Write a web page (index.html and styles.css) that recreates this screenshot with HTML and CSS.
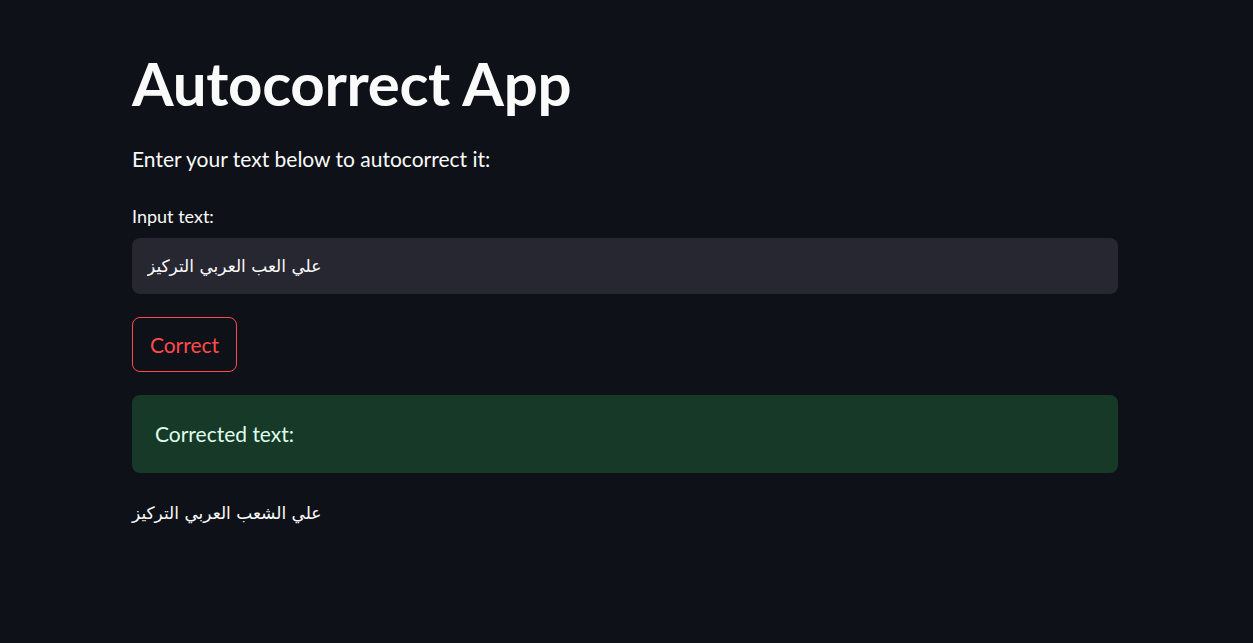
FILE: index.html
```html
<!DOCTYPE html>
<html lang="en">
<head>
<meta charset="utf-8">
<title>Autocorrect App</title>
<link rel="stylesheet" href="styles.css">
</head>
<body>
<main class="main">
  <h1 class="title">Autocorrect App</h1>
  <p class="intro">Enter your text below to autocorrect it:</p>
  <div class="field">
    <label class="label" for="inp">Input text:</label>
    <div class="input-box"><input id="inp" class="input" type="text" value="علي العب العربي التركيز"></div>
  </div>
  <button class="btn" type="button">Correct</button>
  <div class="alert">Corrected text:</div>
  <p class="output">علي الشعب العربي التركيز</p>
</main>
</body>
</html>
```
FILE: styles.css
```css
html, body {
  margin: 0;
  padding: 0;
  background: #0e1117;
  color: #fafafa;
  font-family: "Lato", "DejaVu Sans", sans-serif;
}
.main {
  width: 986px;
  margin: 0 auto 0 132px;
  padding-top: 47px;
  display: flex;
  flex-direction: column;
}
.title {
  margin: 0;
  font-size: 60px;
  font-weight: 700;
  line-height: 1.2;
  letter-spacing: -0.3px;
}
.intro {
  margin: 24px 0 0;
  font-size: 21px;
  line-height: 1.5;
}
.field {
  margin-top: 29px;
  display: flex;
  flex-direction: column;
}
.label {
  font-size: 18px;
  line-height: 1.4;
  margin-bottom: 9px;
}
.input-box {
  background: #262730;
  border-radius: 8px;
  height: 56px;
  display: flex;
  align-items: center;
  padding: 0 15px;
}
.input {
  flex: 1;
  background: transparent;
  border: none;
  outline: none;
  color: #fafafa;
  font-family: "DejaVu Sans", sans-serif;
  font-size: 17px;
  padding: 0;
}
.btn {
  margin-top: 23px;
  align-self: flex-start;
  width: 105px;
  height: 55px;
  background: transparent;
  border: 1px solid #ff4b4b;
  border-radius: 8px;
  color: #ff4b4b;
  font-family: "Lato", sans-serif;
  font-size: 21px;
  padding: 0;
}
.alert {
  margin-top: 23px;
  height: 78px;
  background: #173928;
  border-radius: 8px;
  color: #dffde9;
  display: flex;
  align-items: center;
  padding: 0 23px;
  font-size: 21px;
}
.output {
  margin: 28px 0 0;
  font-family: "DejaVu Sans", sans-serif;
  font-size: 17px;
  line-height: 1.5;
}
```
